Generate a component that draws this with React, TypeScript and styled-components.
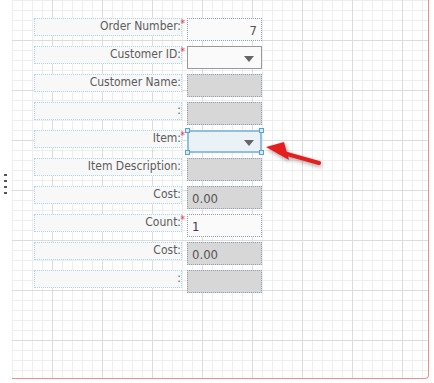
import React, { FC } from 'react';
import styled, { createGlobalStyle, css } from 'styled-components';

const GlobalStyle = createGlobalStyle`
    html, body {
        margin: 0;
        padding: 0;
        background: #ffffff;
    }
    body {
        font-family: 'DejaVu Sans Condensed', 'DejaVu Sans', sans-serif;
    }
`;

const Page = styled.div`
    display: flex;
    width: 434px;
    height: 383px;
    overflow: hidden;
`;

const Gutter = styled.div`
    width: 12px;
    flex-shrink: 0;
    display: flex;
    flex-direction: column;
    align-items: flex-start;
    gap: 4px;
    padding: 174px 0 0 4px;
    box-sizing: border-box;
`;

const GripDot = styled.span`
    display: block;
    width: 3px;
    height: 2px;
    background: #555;
`;

const Canvas = styled.div`
    position: relative;
    width: 417px;
    height: 379px;
    box-sizing: border-box;
    border-right: 1px solid #ee8f8f;
    border-bottom: 1px solid #ee8f8f;
    border-bottom-right-radius: 4px;
    background-color: #fff;
    background-image:
        linear-gradient(to right, #dcdcdc 1px, transparent 1px),
        linear-gradient(to bottom, #dcdcdc 1px, transparent 1px),
        linear-gradient(to right, #eeeeee 1px, transparent 1px),
        linear-gradient(to bottom, #eeeeee 1px, transparent 1px);
    background-size: 50px 50px, 50px 50px, 10px 10px, 10px 10px;
    background-position: 40px 0, 0 40px, 0 0, 0 0;
    padding: 18px 0 0 22px;
`;

const Form = styled.div`
    display: flex;
    flex-direction: column;
    gap: 5px;
`;

const Row = styled.div`
    display: flex;
    align-items: flex-start;
    gap: 5px;
    height: 23px;
`;

const LabelBox = styled.div`
    position: relative;
    width: 148px;
    height: 18px;
    box-sizing: border-box;
    border: 1px dotted #a9d6ee;
    background: #f8f8f8;
    font-size: 12px;
    color: #5c5c5c;
    text-align: right;
    line-height: 15px;
    white-space: nowrap;
`;

const Star = styled.span`
    position: absolute;
    right: -4px;
    top: 0;
    font-size: 10px;
    line-height: 10px;
    color: #f0303c;
`;

type Kind = 'text' | 'select' | 'readonly' | 'active';

const InputBox = styled.div<{ $kind: Kind }>`
    position: relative;
    width: 75px;
    height: 23px;
    box-sizing: border-box;
    border: 1px dotted #8d9fb0;
    background: #fafafa;
    font-size: 13px;
    color: #555;
    line-height: 21px;
    padding: 2px 4px 0;
    display: flex;
    align-items: center;
    ${(p) =>
        p.$kind === 'readonly' &&
        css`
            background: #d7d7d7;
        `}
    ${(p) =>
        p.$kind === 'select' &&
        css`
            border: 1px solid #9a9a9a;
            justify-content: flex-end;
        `}
    ${(p) =>
        p.$kind === 'active' &&
        css`
            border: 2px solid #8fc1df;
            background: #eaf2f8;
            justify-content: flex-end;
            padding-right: 3px;
        `}
`;

const Value = styled.span<{ $align?: 'left' | 'right'; $color?: string }>`
    flex: 1;
    text-align: ${(p) => p.$align || 'left'};
    color: ${(p) => p.$color || '#555'};
`;

const Caret = styled.span`
    width: 0;
    height: 0;
    margin: 0 3px 0 0;
    border-left: 5px solid transparent;
    border-right: 5px solid transparent;
    border-top: 6px solid #666;
`;

const Handle = styled.span<{ $x: 'left' | 'right'; $y: 'top' | 'bottom' }>`
    position: absolute;
    width: 5px;
    height: 5px;
    box-sizing: border-box;
    border: 1px solid #5ea2d0;
    background: #d4e8f5;
    ${(p) => p.$x}: -4px;
    ${(p) => p.$y}: -4px;
`;

const Arrow = styled.svg`
    position: absolute;
    left: 228px;
    top: 120px;
    overflow: visible;
    filter: drop-shadow(1px 2px 2px rgba(0, 0, 0, 0.35));
`;

interface Field {
    label: string;
    required?: boolean;
    kind: Kind;
    value?: string;
    align?: 'left' | 'right';
    color?: string;
}

const fields: Field[] = [
    { label: 'Order Number:', required: true, kind: 'text', value: '7', align: 'right' },
    { label: 'Customer ID:', required: true, kind: 'select' },
    { label: 'Customer Name:', kind: 'readonly' },
    { label: ':', kind: 'readonly' },
    { label: 'Item:', required: true, kind: 'active' },
    { label: 'Item Description:', kind: 'readonly' },
    { label: 'Cost:', kind: 'readonly', value: '0.00' },
    { label: 'Count:', required: true, kind: 'text', value: '1', color: '#4a3158' },
    { label: 'Cost:', kind: 'readonly', value: '0.00' },
    { label: ':', kind: 'readonly' },
];

const FieldInput: FC<{ field: Field }> = ({ field }) => (
    <InputBox $kind={field.kind}>
        {field.value && (
            <Value $align={field.align} $color={field.color}>
                {field.value}
            </Value>
        )}
        {(field.kind === 'select' || field.kind === 'active') && <Caret />}
        {field.kind === 'active' && (
            <>
                <Handle $x="left" $y="top" />
                <Handle $x="right" $y="top" />
                <Handle $x="left" $y="bottom" />
                <Handle $x="right" $y="bottom" />
            </>
        )}
    </InputBox>
);

const App: FC = () => (
    <>
        <GlobalStyle />
        <Page>
            <Gutter>
                <GripDot />
                <GripDot />
                <GripDot />
                <GripDot />
            </Gutter>
            <Canvas>
                <Form>
                    {fields.map((f, i) => (
                        <Row key={i}>
                            <LabelBox>
                                <span>{f.label}</span>
                                {f.required && <Star>*</Star>}
                            </LabelBox>
                            <FieldInput field={f} />
                        </Row>
                    ))}
                </Form>
                <Arrow width="60" height="30" viewBox="0 0 60 30">
                    <line x1="40" y1="32" x2="79" y2="43" stroke="#e61e1e" strokeWidth="4" strokeLinecap="round" />
                    <polygon points="26,27 44,22 49,40" fill="#e61e1e" />
                </Arrow>
            </Canvas>
        </Page>
    </>
);

export default App;
